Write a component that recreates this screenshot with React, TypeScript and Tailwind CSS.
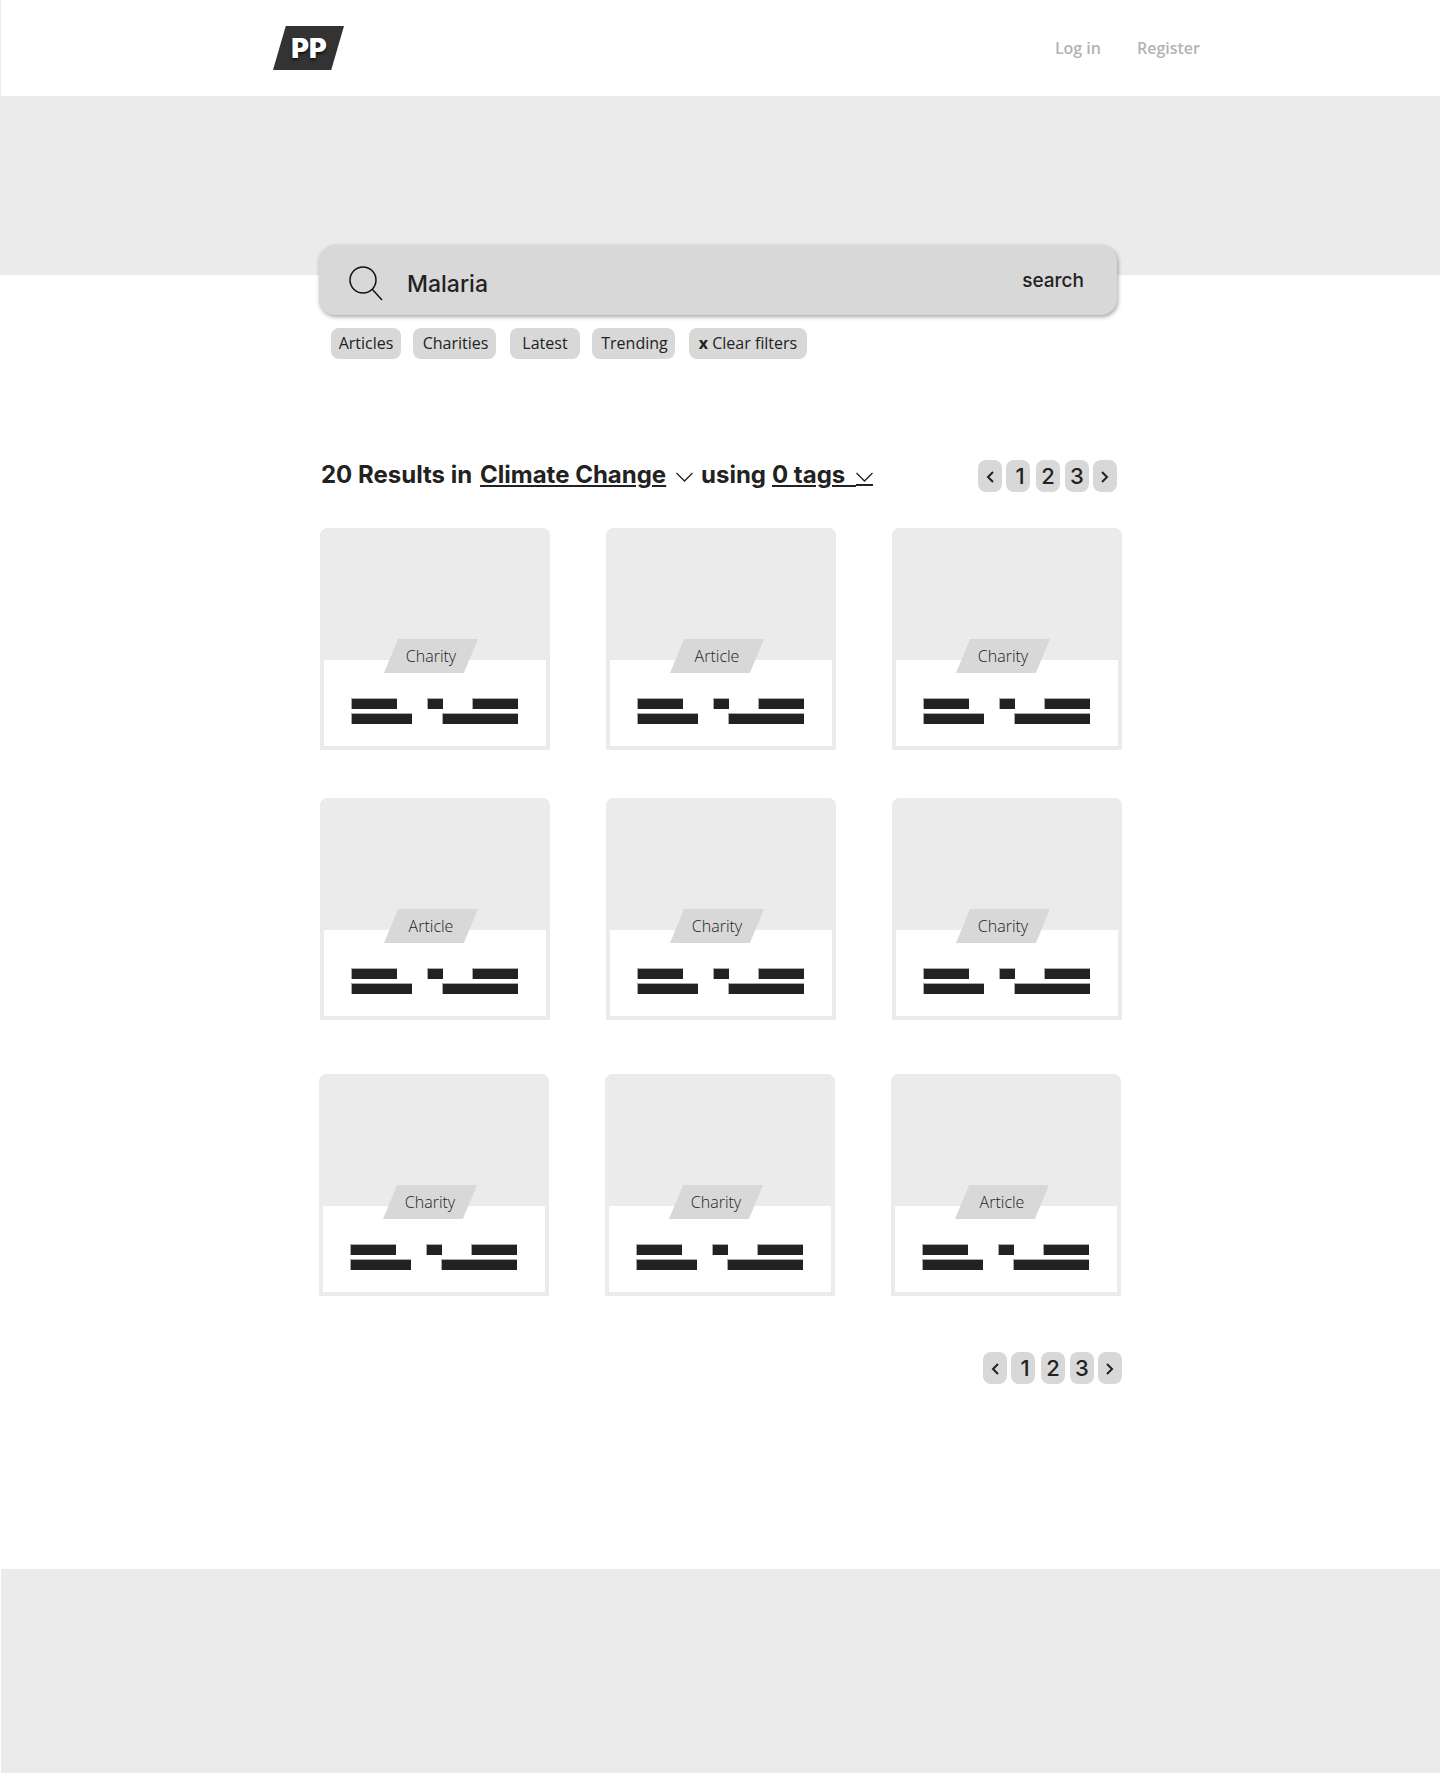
const cards = [
  ['Charity', 'Article', 'Charity'],
  ['Article', 'Charity', 'Charity'],
  ['Charity', 'Charity', 'Article'],
];

const filters = [
  { label: 'Articles', className: 'w-[70px]' },
  { label: 'Charities', className: 'ml-3 w-[83px] pl-0.5' },
  { label: 'Latest', className: 'ml-3.5 w-[70px]' },
  { label: 'Trending', className: 'ml-3 w-[83px] pl-0.5' },
];

function Logo() {
  return (
    <a href="#" aria-label="PP home" className="flex h-11 w-[71px] items-center justify-center bg-[#333] pt-px pl-px text-[27px] leading-none font-black text-white [clip-path:polygon(18%_0,100%_0,82%_100%,0_100%)] [text-shadow:0_2px_3px_rgba(0,0,0,0.7)]">
      PP
    </a>
  );
}

function Chevron() {
  return (
    <svg className="pointer-events-none h-2.5 w-[17px]" viewBox="0 0 17 10" fill="none" stroke="#222" strokeWidth="1.3" aria-hidden="true">
      <path d="M.5 1 8.5 9l8-8" />
    </svg>
  );
}

function Arrow({ next = false }: { next?: boolean }) {
  return (
    <svg className="h-3 w-2" viewBox="0 0 8 12" fill="none" stroke="#222" strokeWidth="2" aria-hidden="true">
      <path d={next ? 'M1 1 6 6 1 11' : 'M7 1 2 6l5 5'} />
    </svg>
  );
}

function Pagination({ label }: { label: string }) {
  const base = 'flex h-8 w-6 items-center justify-center rounded-lg bg-[#d8d8d8]';
  return (
    <nav aria-label={label} className="flex h-8 text-[22px] leading-8 font-medium">
      <button type="button" aria-label="Previous page" className={`${base} pt-0.5`}><Arrow /></button>
      <button type="button" className={`${base} ml-1 pl-1`}>1</button>
      <button type="button" className={`${base} ml-1.5`}>2</button>
      <button type="button" className={`${base} ml-[5px]`}>3</button>
      <button type="button" aria-label="Next page" className={`${base} ml-1 pt-0.5`}><Arrow next /></button>
    </nav>
  );
}

function Bar({ className }: { className: string }) {
  return <span className={`h-[11px] border-t border-l border-[#aaa] bg-[#222] ${className}`} />;
}

function Card({ kind }: { kind: string }) {
  return (
    <article className="relative h-[222px] w-[230px] rounded-t-lg border-4 border-t-0 border-[#ebebeb] bg-white">
      <div className="-mx-1 h-[132px] rounded-t-lg bg-[#ebebeb]" />
      <div className="absolute top-[111px] left-[60px] flex h-[34px] w-[94px] items-center justify-center bg-[#d8d8d8] font-['Open_Sans',sans-serif] text-base font-light text-[#222] [clip-path:polygon(15%_0,100%_0,85%_100%,0_100%)]">
        {kind}
      </div>
      <div className="mx-[27px] mt-[38px] flex flex-col gap-1">
        <div className="flex">
          <Bar className="w-[46px]" />
          <Bar className="ml-[30px] w-4" />
          <Bar className="ml-[29px] w-[46px]" />
        </div>
        <div className="flex">
          <Bar className="w-[61px]" />
          <Bar className="ml-[30px] w-[76px]" />
        </div>
      </div>
    </article>
  );
}

export default function App() {
  return (
    <div className="bg-white pl-px font-['Inter',sans-serif] text-[#222]">
      <header className="-ml-px border-l border-[#ebebeb]">
        <div className="mx-auto flex h-24 max-w-[959px] items-center justify-between pl-8">
          <Logo />
          <nav className="flex gap-9 font-['Open_Sans',sans-serif] text-base font-semibold text-[#b3b3b3]">
            <a href="#">Log in</a>
            <a href="#">Register</a>
          </nav>
        </div>
      </header>
      <div className="-ml-px h-[179px] bg-[#ebebeb]" />

      <main className="mx-auto max-w-[803px]">
        <form className="relative -mt-[30px] mr-[5px] flex h-[70px] items-center rounded-2xl bg-[#d8d8d8] pr-[33px] pl-[30px] shadow-[1px_2px_4px_rgba(0,0,0,0.35)]">
          <svg className="mt-2 h-9 w-9" viewBox="0 0 36 36" fill="none" stroke="#111" strokeWidth="1.5" aria-hidden="true">
            <circle cx="14" cy="14" r="13" />
            <path d="m23 23 10 11" />
          </svg>
          <input aria-label="Search" defaultValue="Malaria" className="mt-2 ml-[22px] min-w-0 flex-1 bg-transparent text-[23px] font-medium outline-none" />
          <button type="submit" className="pt-0.5 text-[19px] font-medium">search</button>
        </form>

        <div className="mt-[13px] ml-3 flex font-['Open_Sans',sans-serif] text-base leading-[31px]">
          {filters.map((f) => (
            <button key={f.label} type="button" className={`h-[31px] rounded-lg bg-[#d8d8d8] text-center ${f.className}`}>{f.label}</button>
          ))}
          <button type="button" className="ml-3.5 h-[31px] w-[118px] rounded-lg bg-[#d8d8d8]"><b>x</b> Clear filters</button>
        </div>

        <div className="mt-[101px] mr-[5px] flex h-8 items-start justify-between">
          <h1 className="ml-0.5 flex h-[30px] items-center text-2xl leading-8 font-bold whitespace-nowrap">
            <span className="w-[159px]">20 Results in</span>
            <select aria-label="Category" className="w-[190px] appearance-none bg-transparent underline decoration-2 underline-offset-2">
              <option>Climate Change</option>
            </select>
            <span className="ml-1.5 pt-1"><Chevron /></span>
            <span className="ml-2 w-[71px]">using</span>
            <select aria-label="Tags" className="w-[84px] appearance-none bg-transparent underline decoration-2 underline-offset-2">
              <option>{'0 tags\u00a0\u00a0'}</option>
            </select>
            <span className="mt-1.5 flex h-4 items-center border-b-2 border-[#222]"><Chevron /></span>
          </h1>
          <Pagination label="Results pages" />
        </div>

        <section aria-label="Results" className="mt-9 flex flex-col gap-12">
          {cards.map((row, i) => (
            <div key={i} className={i === 2 ? 'mt-1.5 mr-px flex justify-between' : 'ml-px flex justify-between'}>
              {row.map((kind, j) => <Card key={j} kind={kind} />)}
            </div>
          ))}
        </section>

        <div className="mt-14 flex justify-end">
          <Pagination label="Results pages, bottom" />
        </div>
      </main>

      <footer className="mt-[185px] h-[204px] bg-[#ebebeb]" />
    </div>
  );
}
